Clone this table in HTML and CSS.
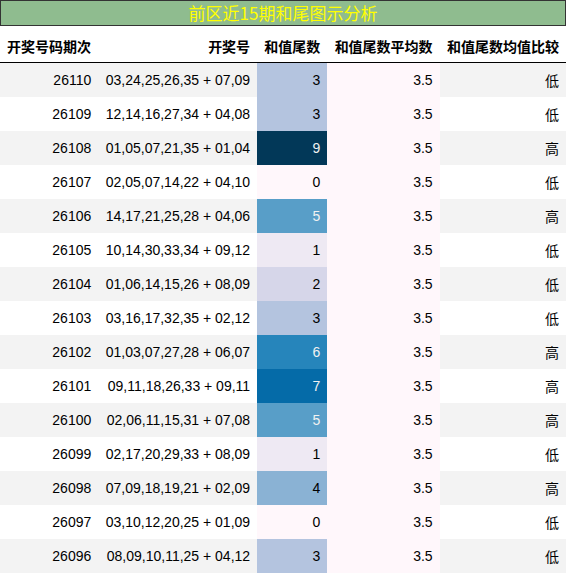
FILE: index.html
```html
<!DOCTYPE html>
<html lang="zh">
<head>
    <meta charset="UTF-8">
    <title>前区近15期和尾图示分析</title>
    <link rel="stylesheet" href="styles.css">
</head>
<body>

<div class="caption">前区近15期和尾图示分析</div>
<table class="tail-table">
    <thead>
        <tr>
            <th class="left">开奖号码期次</th>
            <th>开奖号</th>
            <th>和值尾数</th>
            <th>和值尾数平均数</th>
            <th>和值尾数均值比较</th>
        </tr>
    </thead>
    <tbody>
        <tr><td>26110</td><td>03,24,25,26,35 + 07,09</td><td class="t3">3</td><td class="avg">3.5</td><td>低</td></tr>
        <tr><td>26109</td><td>12,14,16,27,34 + 04,08</td><td class="t3">3</td><td class="avg">3.5</td><td>低</td></tr>
        <tr><td>26108</td><td>01,05,07,21,35 + 01,04</td><td class="t9">9</td><td class="avg">3.5</td><td>高</td></tr>
        <tr><td>26107</td><td>02,05,07,14,22 + 04,10</td><td class="t0">0</td><td class="avg">3.5</td><td>低</td></tr>
        <tr><td>26106</td><td>14,17,21,25,28 + 04,06</td><td class="t5">5</td><td class="avg">3.5</td><td>高</td></tr>
        <tr><td>26105</td><td>10,14,30,33,34 + 09,12</td><td class="t1">1</td><td class="avg">3.5</td><td>低</td></tr>
        <tr><td>26104</td><td>01,06,14,15,26 + 08,09</td><td class="t2">2</td><td class="avg">3.5</td><td>低</td></tr>
        <tr><td>26103</td><td>03,16,17,32,35 + 02,12</td><td class="t3">3</td><td class="avg">3.5</td><td>低</td></tr>
        <tr><td>26102</td><td>01,03,07,27,28 + 06,07</td><td class="t6">6</td><td class="avg">3.5</td><td>高</td></tr>
        <tr><td>26101</td><td>09,11,18,26,33 + 09,11</td><td class="t7">7</td><td class="avg">3.5</td><td>高</td></tr>
        <tr><td>26100</td><td>02,06,11,15,31 + 07,08</td><td class="t5">5</td><td class="avg">3.5</td><td>高</td></tr>
        <tr><td>26099</td><td>02,17,20,29,33 + 08,09</td><td class="t1">1</td><td class="avg">3.5</td><td>低</td></tr>
        <tr><td>26098</td><td>07,09,18,19,21 + 02,09</td><td class="t4">4</td><td class="avg">3.5</td><td>高</td></tr>
        <tr><td>26097</td><td>03,10,12,20,25 + 01,09</td><td class="t0">0</td><td class="avg">3.5</td><td>低</td></tr>
        <tr><td>26096</td><td>08,09,10,11,25 + 04,12</td><td class="t3">3</td><td class="avg">3.5</td><td>低</td></tr>
    </tbody>
</table>

</body>
</html>
```

FILE: styles.css
```css
body {
    margin: 0;
    font-family: "Liberation Sans", "Noto Sans CJK SC", sans-serif;
    font-size: 14px;
    color: #000;
}
.caption {
    height: 24px;
    line-height: 24px;
    border: 1px solid #333;
    background-color: #8fbc8f;
    color: #ffff00;
    text-align: center;
    font-family: "Noto Sans CJK SC", sans-serif;
    font-size: 17px;
}
.tail-table {
    width: 100%;
    border-collapse: collapse;
}
.tail-table th {
    height: 33px;
    padding: 3px 7px 0;
    text-align: right;
    font-family: "Noto Sans CJK SC", sans-serif;
    font-weight: bold;
    font-size: 14px;
    white-space: nowrap;
    border-bottom: 1px solid #000;
}
.tail-table th.left {
    text-align: left;
}
.tail-table td {
    height: 34px;
    padding: 0 7px;
    text-align: right;
    white-space: nowrap;
}
.tail-table tbody tr:nth-child(odd) {
    background-color: #f3f3f3;
}
.tail-table tbody tr:nth-child(even) {
    background-color: #fff;
}
.avg {
    background-color: #fff7fb;
}

/* sum tail gradient, 0..9 */
.t0 { background-color: #fff7fb; color: #000; }
.t1 { background-color: #eee9f3; color: #000; }
.t2 { background-color: #d6d6e9; color: #000; }
.t3 { background-color: #b4c4df; color: #000; }
.t4 { background-color: #8ab2d4; color: #000; }
.t5 { background-color: #589ec8; color: #f1f1f1; }
.t6 { background-color: #2685bb; color: #f1f1f1; }
.t7 { background-color: #056ba8; color: #f1f1f1; }
.t9 { background-color: #023858; color: #f1f1f1; }
```
